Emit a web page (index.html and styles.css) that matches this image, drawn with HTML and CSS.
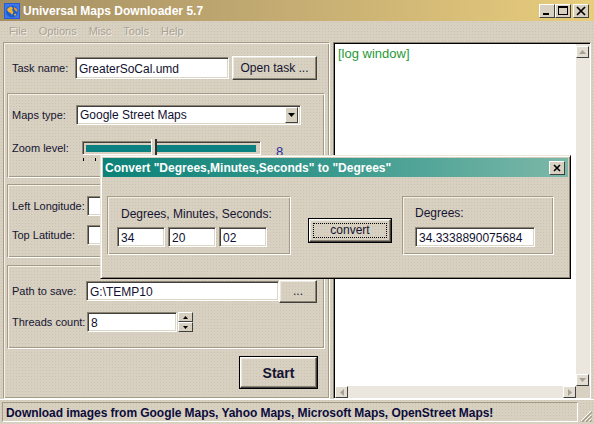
FILE: index.html
```html
<!DOCTYPE html>
<html lang="en">
<head>
    <meta charset="UTF-8">
    <title>Universal Maps Downloader 5.7</title>
    <link rel="stylesheet" href="styles.css">
</head>
<body>
    <div class="window">
        <div class="titlebar">
            <svg class="app-icon" width="16" height="16" viewBox="0 0 16 16">
                <rect x="0" y="0" width="16" height="16" fill="#2a5ad8"/>
                <rect x="1" y="1" width="14" height="14" fill="#3c78e8"/>
                <circle cx="8" cy="8.5" r="6" fill="#1c5cc8"/>
                <path d="M4 5 L7 3.5 L9 5 L8 7 L9.5 9 L8 12 L6.5 10 L4.5 9 L3 7 Z" fill="#f0b030"/>
                <path d="M10 4 L13 6 L13.5 9 L11.5 8 L10 6 Z" fill="#e89820"/>
                <path d="M10 11 L12.5 10.5 L11 13.5 Z" fill="#f0b030"/>
            </svg>
            <span class="title-text">Universal Maps Downloader 5.7</span>
            <div class="caption-buttons">
                <span class="cap-btn"><svg width="16" height="14" viewBox="0 0 16 14"><rect x="4" y="9" width="6" height="2" fill="#000"/></svg></span>
                <span class="cap-btn"><svg width="16" height="14" viewBox="0 0 16 14"><rect x="3.5" y="2.5" width="9" height="8" fill="none" stroke="#000"/><rect x="3" y="2" width="10" height="2" fill="#000"/></svg></span>
                <span class="cap-btn close"><svg width="16" height="14" viewBox="0 0 16 14"><path d="M4 3 L12 11 M12 3 L4 11" stroke="#000" stroke-width="1.7"/></svg></span>
            </div>
        </div>

        <div class="menubar">
            <span>File</span>
            <span>Options</span>
            <span>Misc</span>
            <span>Tools</span>
            <span>Help</span>
        </div>

        <div class="main">
            <div class="left-panel">
                <div class="row task-row">
                    <label class="lbl w63">Task name:</label>
                    <div class="edit task-edit">GreaterSoCal.umd</div>
                    <div class="btn open-btn">Open task ...</div>
                </div>

                <div class="group maps-group">
                    <div class="row">
                        <label class="lbl w64">Maps type:</label>
                        <div class="edit combo">
                            <span>Google Street Maps</span>
                            <span class="combo-arrow"><svg width="7" height="4" viewBox="0 0 7 4"><path d="M0 0 H7 L3.5 4 Z" fill="#000"/></svg></span>
                        </div>
                    </div>
                    <div class="row zoom-row">
                        <label class="lbl w70">Zoom level:</label>
                        <div class="slider">
                            <div class="slider-fill"></div>
                            <div class="slider-thumb"></div>
                        </div>
                        <span class="zoom-value">8</span>
                    </div>
                    <div class="ticks"><i></i><i></i></div>
                </div>

                <div class="group coords-group">
                    <div class="row">
                        <label class="lbl w75">Left Longitude:</label>
                        <div class="edit coord-edit"></div>
                    </div>
                    <div class="row">
                        <label class="lbl w75">Top Latitude:</label>
                        <div class="edit coord-edit"></div>
                    </div>
                </div>

                <div class="group path-group">
                    <div class="row">
                        <label class="lbl w74">Path to save:</label>
                        <div class="edit path-edit">G:\TEMP10</div>
                        <div class="btn browse-btn">...</div>
                    </div>
                    <div class="row">
                        <label class="lbl w75">Threads count:</label>
                        <div class="edit threads-edit">8</div>
                        <div class="spin">
                            <span class="spin-btn"><svg width="5" height="3" viewBox="0 0 5 3"><path d="M0 3 H5 L2.5 0 Z" fill="#000"/></svg></span>
                            <span class="spin-btn"><svg width="5" height="3" viewBox="0 0 5 3"><path d="M0 0 H5 L2.5 3 Z" fill="#000"/></svg></span>
                        </div>
                    </div>
                </div>

                <div class="start-row">
                    <div class="btn default start-btn">Start</div>
                </div>
            </div>

            <div class="log">
                <div class="log-text">[log window]</div>
                <div class="vscroll">
                    <span class="sb-btn"><svg width="7" height="4" viewBox="0 0 7 4"><path d="M0 4 H7 L3.5 0 Z" fill="#a8a090"/></svg></span>
                    <span class="sb-btn"><svg width="7" height="4" viewBox="0 0 7 4"><path d="M0 0 H7 L3.5 4 Z" fill="#a8a090"/></svg></span>
                </div>
                <div class="hscroll">
                    <span class="sb-btn"><svg width="4" height="7" viewBox="0 0 4 7"><path d="M4 0 V7 L0 3.5 Z" fill="#a8a090"/></svg></span>
                    <span class="sb-btn"><svg width="4" height="7" viewBox="0 0 4 7"><path d="M0 0 V7 L4 3.5 Z" fill="#a8a090"/></svg></span>
                </div>
                <div class="sb-corner"></div>
            </div>
        </div>

        <div class="statusbar">
            <div class="status-panel">Download images from Google Maps, Yahoo Maps, Microsoft Maps, OpenStreet Maps!</div>
            <svg class="grip" width="12" height="12" viewBox="0 0 12 12">
                <path d="M11 1 L1 11 M11 5 L5 11 M11 9 L9 11" stroke="#fff" stroke-width="1"/>
                <path d="M12 2 L2 12 M12 6 L6 12 M12 10 L10 12" stroke="#a09880" stroke-width="1.2"/>
            </svg>
        </div>

        <!-- converter dialog floats over the main window -->
        <div class="dialog">
            <div class="dialog-title">
                <span>Convert "Degrees,Minutes,Seconds" to "Degrees"</span>
                <span class="cap-btn dlg-close"><svg width="14" height="12" viewBox="0 0 14 12"><path d="M4 3 L10 9 M10 3 L4 9" stroke="#000" stroke-width="1.6"/></svg></span>
            </div>
            <div class="dialog-body">
                <div class="group dms-group">
                    <div class="group-label">Degrees, Minutes, Seconds:</div>
                    <div class="dms-row">
                        <div class="edit dms-edit">34</div>
                        <div class="edit dms-edit">20</div>
                        <div class="edit dms-edit">02</div>
                    </div>
                </div>
                <div class="btn default convert-btn"><span class="focus">convert</span></div>
                <div class="group deg-group">
                    <div class="group-label">Degrees:</div>
                    <div class="edit deg-edit">34.3338890075684</div>
                </div>
            </div>
        </div>
    </div>
</body>
</html>
```

FILE: styles.css
```css
body {
    margin: 0;
    font-family: "Liberation Sans", Arial, sans-serif;
    font-size: 11px;
    color: #141432;
}
.window {
    position: relative;
    width: 594px;
    height: 424px;
    overflow: hidden;
    background-color: #d8d0c0;
    background-image: radial-gradient(#cbc3b1 0.6px, transparent 0.8px);
    background-size: 3px 3px;
}

/* title bar */
.titlebar {
    height: 21px;
    display: flex;
    align-items: center;
    background: linear-gradient(to right, #a48f62 0%, #c2aa72 45%, #e8cd7c 100%);
}
.app-icon {
    margin: 0 3px 0 4px;
}
.title-text {
    color: #fff;
    font-weight: bold;
    font-size: 12px;
    flex: 1;
}
.caption-buttons {
    display: flex;
    margin-right: 5px;
}
.cap-btn {
    display: flex;
    align-items: center;
    justify-content: center;
    width: 16px;
    height: 14px;
    background: #d8d0c0;
    border: 1px solid;
    border-color: #fff #404040 #404040 #fff;
    box-sizing: border-box;
}
.cap-btn.close {
    margin-left: 2px;
}
.cap-btn svg {
    flex: none;
}

/* menu */
.menubar {
    height: 19px;
    display: flex;
    align-items: center;
    padding-left: 9px;
    gap: 12px;
    color: #a8a294;
    text-shadow: 1px 1px #f2eee6;
    font-size: 11px;
}

/* main area */
.main {
    display: flex;
    margin-top: 2px;
    height: 357px;
}
.left-panel {
    margin-left: 3px;
    width: 327px;
    box-sizing: border-box;
    padding: 13px 4px 0 3px;
    border: 1px solid;
    border-color: #a49a86 #fff #fff #a49a86;
    box-shadow: inset 1px 1px #f4f0e8, inset -1px -1px #a49a86;
}
.row {
    display: flex;
    align-items: center;
    height: 20px;
}
.task-row {
    height: 24px;
    padding-left: 5px;
}
.lbl {
    flex: none;
}
.w63 { width: 63px; }
.w64 { width: 64px; }
.w70 { width: 70px; }
.w74 { width: 74px; }
.w75 { width: 75px; }

.edit {
    box-sizing: border-box;
    height: 20px;
    background: #fff;
    border: 1px solid;
    border-color: #8c8470 #fff #fff #8c8470;
    box-shadow: inset 1px 1px #404040, inset -1px -1px #dcd6c8;
    padding: 3px 0 0 3px;
    font-size: 12px;
    color: #101030;
    white-space: nowrap;
    overflow: hidden;
}
.btn {
    box-sizing: border-box;
    display: flex;
    align-items: center;
    justify-content: center;
    border: 1px solid;
    border-color: #fff #404040 #404040 #fff;
    box-shadow: inset -1px -1px #8c8470, inset 1px 1px #ebe7dd;
    font-size: 12px;
    color: #141432;
}
.btn.default {
    outline: 1px solid #000;
}
.task-edit {
    width: 154px;
    height: 22px;
    padding-top: 4px;
}
.open-btn {
    width: 85px;
    height: 24px;
    margin-left: 3px;
}

/* group boxes */
.group {
    box-sizing: border-box;
    border: 1px solid;
    border-color: #a49a86 #fff #fff #a49a86;
    box-shadow: inset 1px 1px #f4f0e8, inset -1px -1px #a49a86;
    padding-left: 4px;
}
.maps-group {
    height: 85px;
    margin-top: 13px;
    padding-top: 11px;
}
.combo {
    width: 225px;
    display: flex;
    justify-content: space-between;
    padding: 2px 2px 0 3px;
}
.combo-arrow {
    width: 13px;
    height: 16px;
    box-sizing: border-box;
    display: flex;
    align-items: center;
    justify-content: center;
    background: #d8d0c0;
    border: 1px solid;
    border-color: #fff #404040 #404040 #fff;
    margin-top: -1px;
}
.zoom-row {
    margin-top: 16px;
    height: 14px;
}
.slider {
    position: relative;
    width: 179px;
    height: 14px;
    box-sizing: border-box;
    border: 1px solid;
    border-color: #8c8470 #fff #fff #8c8470;
    box-shadow: inset 1px 1px #404040;
}
.slider-fill {
    position: absolute;
    left: 3px;
    right: 4px;
    top: 3px;
    bottom: 2px;
    background: #0a8080;
}
.slider-thumb {
    position: absolute;
    left: 68px;
    top: -3px;
    width: 3px;
    height: 17px;
    background: #d8d0c0;
    border-left: 1px solid #fff;
    border-right: 2px solid #303030;
}
.zoom-value {
    margin-left: 15px;
    margin-top: 6px;
    font-size: 13px;
    color: #2a2aa0;
}
.ticks {
    display: flex;
    gap: 11px;
    margin: 3px 0 0 71px;
}
.ticks i {
    width: 1px;
    height: 3px;
    background: #000;
}

.coords-group {
    height: 74px;
    margin-top: 6px;
    padding-top: 11px;
}
.coords-group .row + .row {
    margin-top: 9px;
}
.coord-edit {
    width: 150px;
}

.path-group {
    height: 84px;
    margin-top: 7px;
    padding-top: 15px;
}
.path-group .row + .row {
    margin-top: 11px;
}
.path-edit {
    width: 193px;
}
.browse-btn {
    width: 38px;
    height: 23px;
}
.threads-edit {
    width: 90px;
}
.spin {
    display: flex;
    flex-direction: column;
    margin-left: 1px;
}
.spin-btn {
    width: 15px;
    height: 10px;
    box-sizing: border-box;
    display: flex;
    align-items: center;
    justify-content: center;
    border: 1px solid;
    border-color: #fff #404040 #404040 #fff;
}

.start-row {
    display: flex;
    justify-content: flex-end;
    margin-top: 8px;
    padding-right: 8px;
}
.start-btn {
    width: 77px;
    height: 31px;
    font-weight: bold;
    font-size: 14px;
}

/* log window */
.log {
    margin-left: 3px;
    width: 258px;
    box-sizing: border-box;
    border: 1px solid;
    border-color: #8c8470 #fff #fff #8c8470;
    box-shadow: inset 1px 1px #000;
    display: grid;
    grid-template-columns: 1fr 14px;
    grid-template-rows: 1fr 12px;
    padding: 1px 0 0 1px;
}
.log-text {
    background: #fff;
    color: #1f9a35;
    font-size: 13px;
    padding: 2px 0 0 3px;
}
.vscroll {
    background: #ebe7de;
    display: flex;
    flex-direction: column;
    justify-content: space-between;
    padding: 2px 0 0;
}
.hscroll {
    background: #ebe7de;
    display: flex;
    justify-content: space-between;
}
.sb-btn {
    width: 13px;
    height: 12px;
    box-sizing: border-box;
    display: flex;
    align-items: center;
    justify-content: center;
    background: #e2ddd2;
    border: 1px solid;
    border-color: #fff #404040 #404040 #fff;
}
.sb-corner {
    background: #d8d0c0;
}

/* status bar */
.statusbar {
    display: flex;
    align-items: flex-end;
    height: 25px;
    border-top: 1px solid #fff;
    box-sizing: border-box;
    padding: 2px;
}
.status-panel {
    flex: 1;
    height: 20px;
    box-sizing: border-box;
    border: 1px solid;
    border-color: #a49a86 #fff #fff #a49a86;
    padding: 3px 0 0 3px;
    font-weight: bold;
    font-size: 12px;
    letter-spacing: -0.05px;
    color: #0c0c3c;
    white-space: nowrap;
}
.grip {
    margin-left: 2px;
}

/* dialog */
.dialog {
    position: absolute;
    left: 100px;
    top: 155px;
    width: 471px;
    height: 124px;
    box-sizing: border-box;
    background-color: #d8d0c0;
    background-image: radial-gradient(#cbc3b1 0.6px, transparent 0.8px);
    background-size: 3px 3px;
    border: 1px solid;
    border-color: #ebe7dd #000 #000 #ebe7dd;
    box-shadow: inset 1px 1px #fff, inset -1px -1px #8c8470;
    padding: 2px;
}
.dialog-title {
    height: 19px;
    display: flex;
    align-items: center;
    justify-content: space-between;
    padding: 0 3px 0 2px;
    background: linear-gradient(to right, #0c8278 0%, #3a9a8e 50%, #7cb8a8 100%);
    color: #fff;
    font-weight: bold;
    font-size: 12px;
}
.dlg-close {
    width: 16px;
    height: 14px;
}
.dialog-body {
    display: flex;
    padding: 19px 0 0 4px;
}
.group-label {
    font-size: 12px;
}
.dms-group {
    width: 184px;
    height: 59px;
    padding: 10px 0 0 9px;
}
.dms-group .group-label {
    margin-left: 4px;
}
.dms-row {
    display: flex;
    gap: 3px;
    margin-top: 6px;
}
.dms-edit {
    width: 48px;
}
.convert-btn {
    width: 82px;
    height: 23px;
    margin: 23px 0 0 18px;
}
.focus {
    width: 74px;
    height: 15px;
    box-sizing: border-box;
    border: 1px dotted #000;
    text-align: center;
    line-height: 13px;
}
.deg-group {
    width: 152px;
    height: 59px;
    margin-left: 11px;
    padding: 9px 0 0 12px;
}
.deg-edit {
    width: 120px;
    margin-top: 7px;
}
```
